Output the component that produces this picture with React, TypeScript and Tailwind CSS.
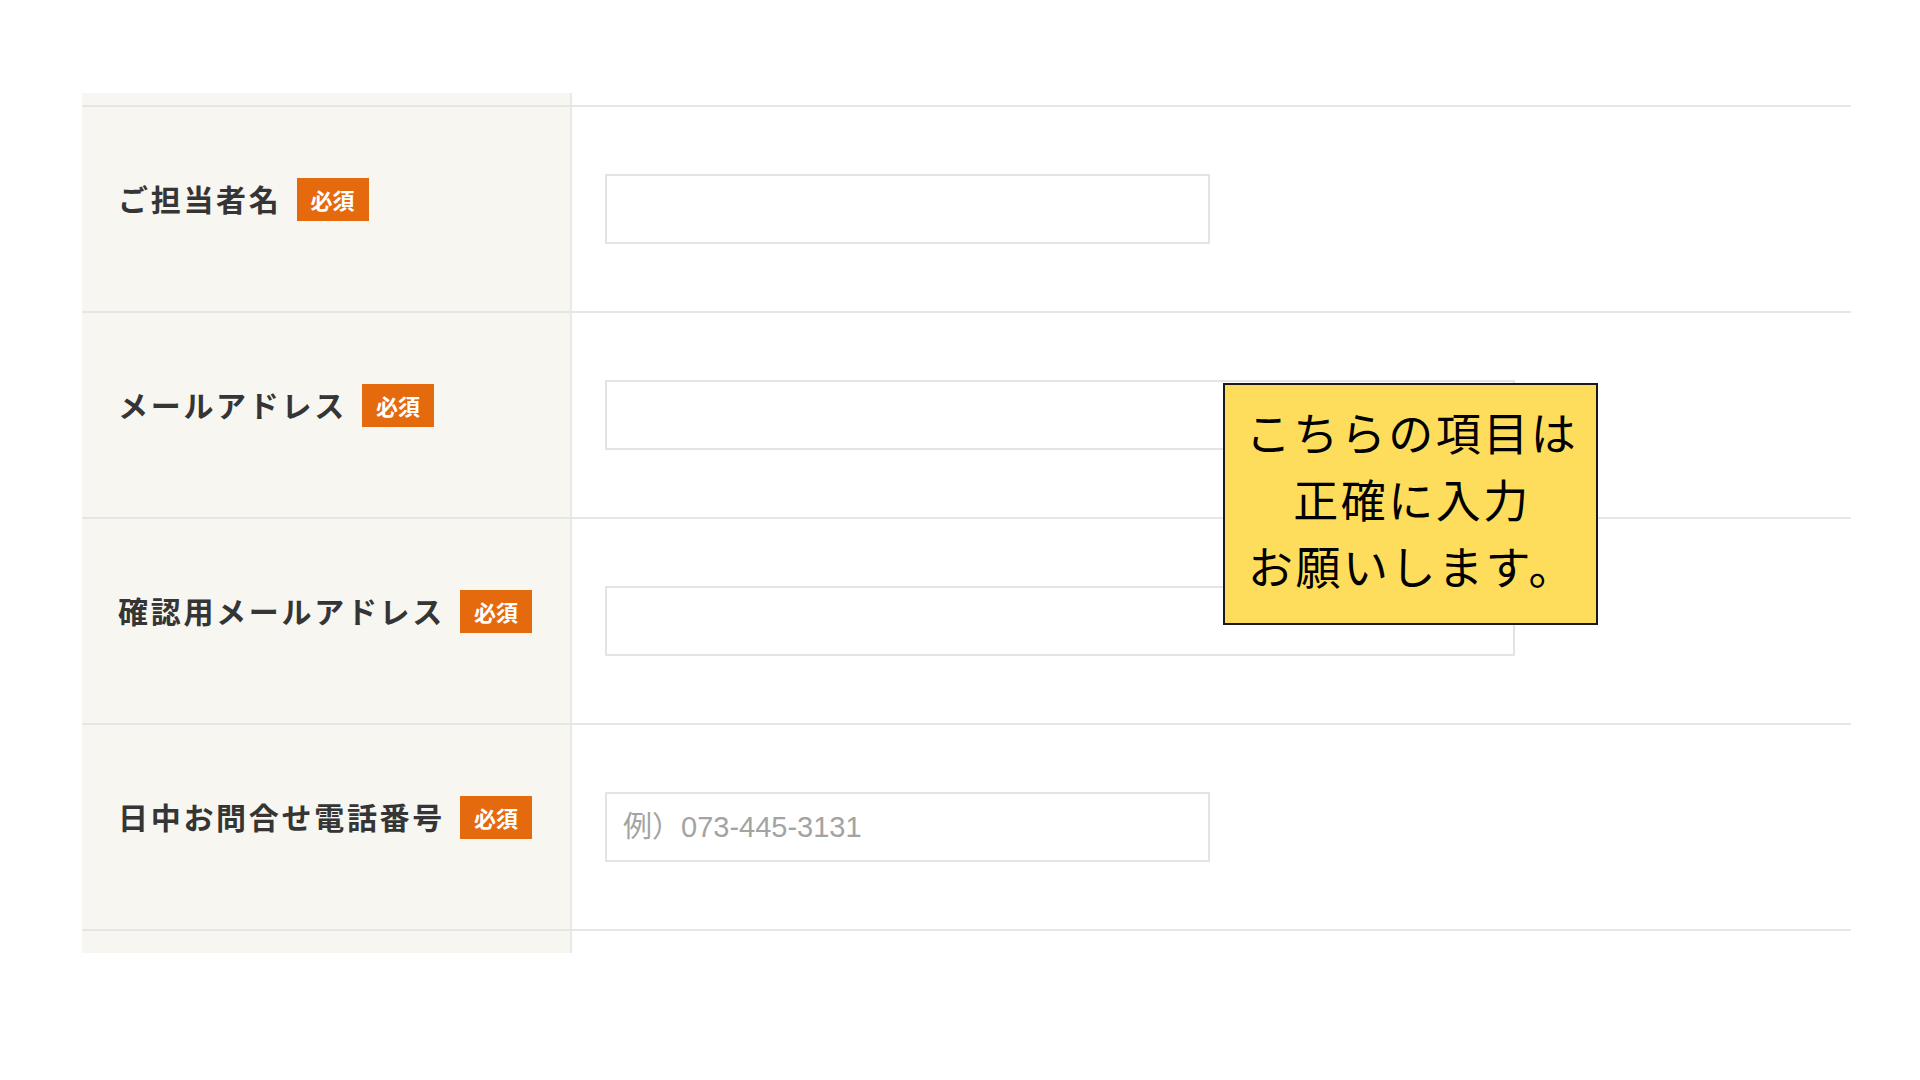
import React from "react";

const fields = [
  { label: "ご担当者名", width: "w-[605px]", placeholder: "" },
  { label: "メールアドレス", width: "w-[910px]", placeholder: "" },
  { label: "確認用メールアドレス", width: "w-[910px]", placeholder: "" },
  { label: "日中お問合せ電話番号", width: "w-[605px]", placeholder: "例）073-445-3131" },
];

const Row = ({ label, width, placeholder }: { label: string; width: string; placeholder: string }) => {
  return (
    <div className="flex h-[206px] border-t-2 border-[#e6e6e6]">
      <div className="flex w-[490px] shrink-0 items-center border-r-2 border-[#e9e9e6] bg-[#f7f6f1] pb-[22px] pl-[36px]">
        <span className="text-[30px] font-bold tracking-[0.09em] text-[#353535]">{label}</span>
        <span className="ml-[15px] mt-[3px] flex h-[43px] w-[72px] items-center justify-center bg-[#e5690d] text-[22px] font-bold text-white">
          必須
        </span>
      </div>
      <div className="flex flex-1 items-center pl-[33px]">
        <input
          placeholder={placeholder}
          className={`${width} h-[70px] border-2 border-[#e4e4e4] bg-white px-[16px] text-[29px] outline-none placeholder:text-[#a3a3a3]`}
          style={{ fontFamily: '"Liberation Sans", "Noto Sans CJK JP", sans-serif' }}
        />
      </div>
    </div>
  );
};

export default function App() {
  return (
    <div
      className="min-h-screen bg-white pl-[82px] pt-[93px]"
      style={{ fontFamily: '"Noto Sans CJK JP", "Noto Sans", sans-serif' }}
    >
      <div className="relative w-[1769px]">
        <div className="flex h-[12px]">
          <div className="w-[490px] border-r-2 border-[#e9e9e6] bg-[#f7f6f1]" />
        </div>

        {fields.map((f) => (
          <Row key={f.label} {...f} />
        ))}

        <div className="flex h-[24px] border-t-2 border-[#e6e6e6]">
          <div className="w-[490px] border-r-2 border-[#e9e9e6] bg-[#f7f6f1]" />
        </div>

        {/* callout note */}
        <div className="absolute left-[1141px] top-[290px] flex h-[242px] w-[375px] flex-col items-center border-2 border-[#1a1a1a] bg-[#fedd5c] pl-[3px] pt-[13px] text-[45px] leading-[67px] tracking-[2.5px] text-black">
          <div>こちらの項目は</div>
          <div>正確に入力</div>
          <div>お願いします。</div>
        </div>
      </div>
    </div>
  );
}
